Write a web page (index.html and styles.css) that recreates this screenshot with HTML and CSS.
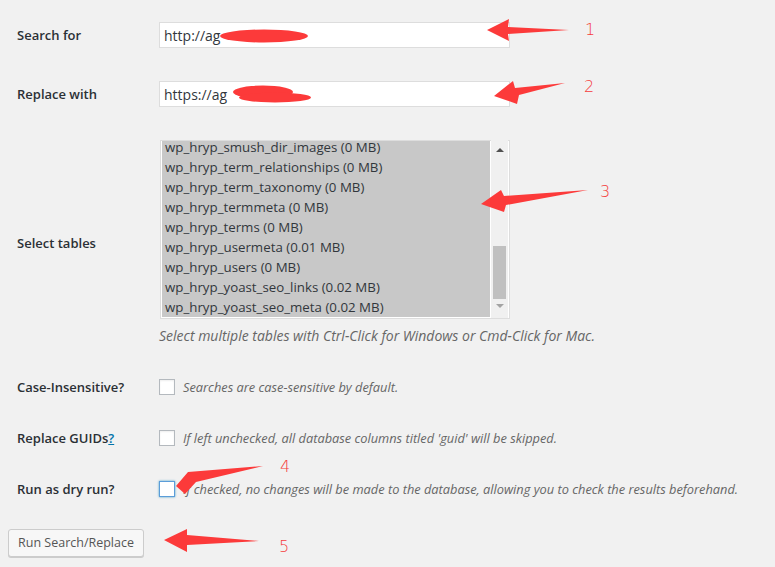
FILE: index.html
```html
<!DOCTYPE html>
<html>
<head>
<meta charset="utf-8">
<link rel="stylesheet" href="styles.css">
</head>
<body>
<div class="page">
  <form class="form">
    <div class="row row-input">
      <label class="label">Search for</label>
      <div class="field"><input class="text" type="text" value="http://ag"></div>
    </div>
    <div class="row row-input">
      <label class="label">Replace with</label>
      <div class="field"><input class="text" type="text" value="https://ag"></div>
    </div>
    <div class="row row-select">
      <label class="label">Select tables</label>
      <div class="field">
        <div class="listbox">
          <div class="list">
            <div class="options">
              <div class="opt">wp_hryp_smush_dir_images (0 MB)</div>
              <div class="opt">wp_hryp_term_relationships (0 MB)</div>
              <div class="opt">wp_hryp_term_taxonomy (0 MB)</div>
              <div class="opt">wp_hryp_termmeta (0 MB)</div>
              <div class="opt">wp_hryp_terms (0 MB)</div>
              <div class="opt">wp_hryp_usermeta (0.01 MB)</div>
              <div class="opt">wp_hryp_users (0 MB)</div>
              <div class="opt">wp_hryp_yoast_seo_links (0.02 MB)</div>
              <div class="opt">wp_hryp_yoast_seo_meta (0.02 MB)</div>
            </div>
          </div>
          <div class="scrollbar">
            <span class="sb-up"></span>
            <span class="sb-thumb"></span>
            <span class="sb-down"></span>
          </div>
        </div>
        <p class="description">Select multiple tables with Ctrl-Click for Windows or Cmd-Click for Mac.</p>
      </div>
    </div>
    <div class="row row-check">
      <label class="label">Case-Insensitive?</label>
      <div class="field check-field"><span class="checkbox"></span><span class="description">Searches are case-sensitive by default.</span></div>
    </div>
    <div class="row row-check">
      <label class="label">Replace GUIDs<a class="help" href="#">?</a></label>
      <div class="field check-field"><span class="checkbox"></span><span class="description">If left unchecked, all database columns titled 'guid' will be skipped.</span></div>
    </div>
    <div class="row row-check">
      <label class="label">Run as dry run?</label>
      <div class="field check-field"><span class="checkbox focus"></span><span class="description">If checked, no changes will be made to the database, allowing you to check the results beforehand.</span></div>
    </div>
  </form>
  <div class="submit"><button class="button" type="button">Run Search/Replace</button></div>

  <svg class="annot" width="775" height="567" viewBox="0 0 775 567">
    <g fill="#fc3a3a">
      <ellipse cx="264" cy="36" rx="44" ry="6.5"/>
      <ellipse cx="263" cy="92" rx="30" ry="6.5"/>
      <ellipse cx="275" cy="97.5" rx="36" ry="5"/>
      <polygon points="487,30 509,19 508,27 569,30 508,34 509,41"/>
      <polygon points="494,96 513,81 515,88 565,83 519,95 517,104"/>
      <polygon points="481,204 501,190 504,196 588,190 506,205 504,212"/>
      <polygon points="176,486 188,472 263,466 196,482 185,494"/>
      <polygon points="164,540 187,529 187,535 259,541 187,545 187,552"/>
    </g>
    <g class="num" fill="#f53b3b">
      <text x="585" y="35">1</text>
      <text x="584" y="92">2</text>
      <text x="600" y="197">3</text>
      <text x="280" y="472">4</text>
      <text x="279" y="552">5</text>
    </g>
  </svg>
</div>
</body>
</html>
```
FILE: styles.css
```css
* { box-sizing: border-box; }
html, body { margin: 0; padding: 0; }
body {
  background: #f1f1f1;
  font-family: "Open Sans", "Noto Sans", sans-serif;
  font-size: 13px;
  color: #23282d;
}
.page {
  position: relative;
  width: 775px;
  height: 567px;
  overflow: hidden;
}
.form {
  display: flex;
  flex-direction: column;
  gap: 33px;
  padding: 22px 0 0 17px;
}
.row {
  display: grid;
  grid-template-columns: 142px 1fr;
  align-items: center;
}
.label {
  font-weight: 600;
  font-size: 13px;
  color: #2b3035;
}
.help { color: #0073aa; text-decoration: underline; }
.row-input .field { height: 26px; }
.text {
  display: block;
  width: 351px;
  height: 26px;
  margin: 0;
  border: 1px solid #ddd;
  background: #fff;
  padding: 0 4px;
  font-family: "Open Sans", "Noto Sans", sans-serif;
  font-size: 14px;
  color: #32373c;
  outline: none;
}
.listbox {
  display: flex;
  width: 350px;
  height: 179px;
  margin-left: 1px;
  border: 1px solid #ddd;
  background: #fff;
  padding: 0 0 1px 1px;
}
.list {
  width: 328px;
  background: #c8c8c8;
  overflow: hidden;
}
.options { margin-top: -3px; }
.opt {
  height: 20px;
  line-height: 18px;
  padding-left: 3px;
  font-size: 13.3px;
  color: #32373c;
  white-space: nowrap;
}
.scrollbar {
  margin-left: 1px;
  width: 17px;
  margin-top: -1px;
  margin-bottom: -1px;
  background: #f0f0f0;
  display: flex;
  flex-direction: column;
  align-items: center;
}
.sb-up {
  margin-top: 8px;
  width: 0; height: 0;
  border-left: 4px solid transparent;
  border-right: 4px solid transparent;
  border-bottom: 4px solid #505050;
}
.sb-thumb {
  margin-top: 94px;
  width: 13px;
  height: 53px;
  background: #c0c0c0;
}
.sb-down {
  margin-top: 5px;
  width: 0; height: 0;
  border-left: 4px solid transparent;
  border-right: 4px solid transparent;
  border-top: 4px solid #a3a3a3;
}
.description {
  font-style: italic;
  font-size: 12.8px;
  color: #666;
  white-space: nowrap;
}
p.description { margin: 8px 0 0; line-height: 18px; font-size: 14px; }
.row-check .field { height: 18px; }
.check-field { display: flex; align-items: center; gap: 8px; }
.checkbox {
  flex: none;
  width: 16px;
  height: 16px;
  background: #fff;
  border: 1px solid #b4b9be;
  box-shadow: inset 0 1px 2px rgba(0,0,0,0.07);
}
.checkbox.focus {
  border-color: #5b9dd9;
  box-shadow: 0 0 2px rgba(30,140,190,0.8);
}
.submit { padding: 31px 0 0 8px; }
.button {
  height: 28px;
  width: 136px;
  padding: 0 6px 1px;
  white-space: nowrap;
  border: 1px solid #ccc;
  border-radius: 3px;
  background: #f7f7f7;
  box-shadow: 0 1px 0 #ccc;
  font-family: "Open Sans", "Noto Sans", sans-serif;
  font-size: 12.5px;
  color: #555;
}
.annot {
  position: absolute;
  left: 0;
  top: 0;
  pointer-events: none;
}
.num text {
  font-family: "DejaVu Sans", sans-serif;
  font-size: 16px;
  font-weight: 300;
}
```
